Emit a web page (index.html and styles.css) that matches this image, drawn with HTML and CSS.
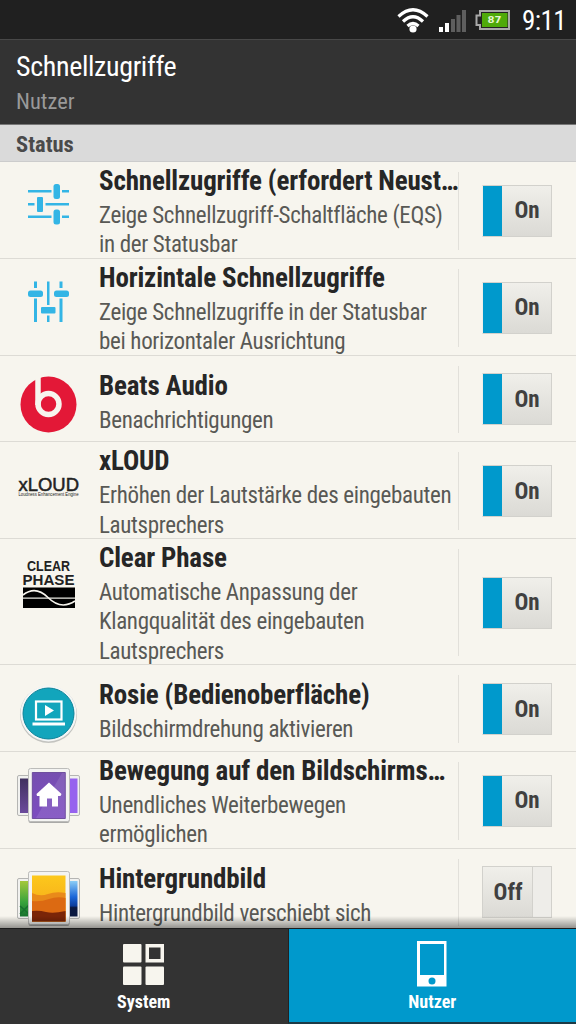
FILE: index.html
```html
<!DOCTYPE html>
<html lang="de">

<head>
  <meta charset="UTF-8">
  <meta name="viewport" content="width=device-width, initial-scale=1.0">
  <title>Schnellzugriffe</title>
  <link rel="stylesheet" href="styles.css">
</head>

<body>
  <div class="statusbar">
    <svg class="wifi" width="32" height="26" viewBox="0 0 32 26">
      <g fill="none" stroke="#fff" stroke-width="3.2">
        <path d="M1.500 9.500Q16 -4 30.500 9.500"/>
        <path d="M6 14.500Q16 5 26 14.500"/>
        <path d="M10.500 19Q16 14 21.500 19"/>
      </g>
      <circle cx="16" cy="22" r="3.600" fill="#fff"/>
    </svg>
    <svg class="signal" width="28" height="22" viewBox="0 0 28 22">
      <g fill="#fff">
        <rect x="0" y="17" width="4" height="5"/>
        <rect x="6" y="13" width="4" height="9"/>
      </g>
      <g fill="#5e5e5e">
        <rect x="12" y="9" width="4" height="13"/>
        <rect x="17.500" y="5" width="4" height="17"/>
        <rect x="23" y="0" width="4" height="22"/>
      </g>
    </svg>
    <svg class="battery" width="36" height="20" viewBox="0 0 36 20">
      <path d="M5 1h29v18H5v-4H1.500V5.500H5z" fill="#222" stroke="#a8a8a8" stroke-width="2"/>
      <rect x="7" y="3" width="25.500" height="14" fill="#4faa0a"/>
      <text x="12.500" y="13.200" textLength="14" lengthAdjust="spacingAndGlyphs">87</text>
    </svg>
    <div class="clock">9:11</div>
  </div>

  <div class="header">
    <h1>Schnellzugriffe</h1>
    <p>Nutzer</p>
  </div>

  <h2 class="section">Status</h2>

  <ul class="list">
    <li class="item">
      <svg class="icon" width="64" height="64" viewBox="0 0 64 64">
        <g fill="#33b5e5">
          <path d="M12 18h23.500v2.500H12zM46 18h7v2.500h-7zM12 31h6.500v2.500H12zM29.500 31H53v2.500H29.500zM12 43.500h23.500V46H12zM46 43.500h7V46h-7z"/>
          <rect x="37.500" y="12" width="6.500" height="15" rx="2.500"/>
          <rect x="21" y="25" width="6" height="15" rx="1"/>
          <rect x="37.500" y="37.500" width="6.500" height="15" rx="2.500"/>
        </g>
      </svg>
      <div class="text">
        <h3>Schnellzugriffe (erfordert Neust…</h3>
        <p>Zeige Schnellzugriff-Schaltfläche (EQS)<br>in der Statusbar</p>
      </div>
      <div class="switch"><button class="toggle on">On</button></div>
    </li>

    <li class="item">
      <svg class="icon" width="64" height="64" viewBox="0 0 64 64">
        <g fill="#33b5e5">
          <path d="M18 12.500h3V19h-3zM18 29.500h3V53h-3zM31 12.500h2.500v23.500H31zM31 46.500h2.500V53H31zM43.500 12.500h3V19h-3zM43.500 29.500h3V53h-3z"/>
          <rect x="12" y="21.500" width="15" height="6.500" rx="2.500"/>
          <rect x="25" y="38" width="14.500" height="6.500" rx="1"/>
          <rect x="38" y="21.500" width="15" height="6.500" rx="2.500"/>
        </g>
      </svg>
      <div class="text">
        <h3>Horizintale Schnellzugriffe</h3>
        <p>Zeige Schnellzugriffe in der Statusbar<br>bei horizontaler Ausrichtung</p>
      </div>
      <div class="switch"><button class="toggle on">On</button></div>
    </li>

    <li class="item single">
      <svg class="icon" width="64" height="64" viewBox="0 0 64 64">
        <circle cx="32.500" cy="32.500" r="28" fill="#e31837"/>
        <path d="M22 3v30" stroke="#f7f5ee" stroke-width="5.500" fill="none"/>
        <circle cx="32.500" cy="32" r="10.500" fill="none" stroke="#f7f5ee" stroke-width="5.500"/>
      </svg>
      <div class="text">
        <h3>Beats Audio</h3>
        <p>Benachrichtigungen</p>
      </div>
      <div class="switch"><button class="toggle on">On</button></div>
    </li>

    <li class="item">
      <svg class="icon" width="64" height="64" viewBox="0 0 64 64">
        <text class="logo xloud" x="2.500" y="38.500" textLength="60.500" lengthAdjust="spacingAndGlyphs">xLOUD</text>
        <text class="logo tiny" x="2.500" y="44" textLength="60" lengthAdjust="spacingAndGlyphs">Loudness Enhancement Engine</text>
      </svg>
      <div class="text">
        <h3>xLOUD</h3>
        <p>Erhöhen der Lautstärke des eingebauten<br>Lautsprechers</p>
      </div>
      <div class="switch"><button class="toggle on">On</button></div>
    </li>

    <li class="item">
      <svg class="icon" width="64" height="64" viewBox="0 0 64 64">
        <text class="logo bold" x="11" y="22" font-size="15.500" textLength="43" lengthAdjust="spacingAndGlyphs">CLEAR</text>
        <text class="logo bold" x="6.500" y="35.500" font-size="14.500" textLength="52" lengthAdjust="spacingAndGlyphs">PHASE</text>
        <path fill="#000" d="M7 38.500h52v20.500H7z"/>
        <path d="M7 49.200h52" stroke="#e8e8e2" stroke-width="1.200"/>
        <path d="M7 46C14 40.500 23 39.500 32 48.500S50 58 59 52" fill="none" stroke="#f7f5ee" stroke-width="1.600"/>
      </svg>
      <div class="text">
        <h3>Clear Phase</h3>
        <p>Automatische Anpassung der<br>Klangqualität des eingebauten<br>Lautsprechers</p>
      </div>
      <div class="switch"><button class="toggle on">On</button></div>
    </li>

    <li class="item single">
      <svg class="icon" width="64" height="64" viewBox="0 0 64 64">
        <circle cx="32.500" cy="33.500" r="28.500" fill="#c4c4c0"/>
        <circle cx="32.500" cy="32.500" r="28" fill="#f4f6f6"/>
        <circle cx="32.500" cy="32.500" r="25.500" fill="#12a5bc" stroke="#0c8399"/>
        <rect x="20" y="20.500" width="25.500" height="18" fill="none" stroke="#fff" stroke-width="2.200"/>
        <path fill="#fff" d="M29 24l9 5.500L29 35zM16.500 41.500H49V44.500H16.500z"/>
      </svg>
      <div class="text">
        <h3>Rosie (Bedienoberfläche)</h3>
        <p>Bildschirmdrehung aktivieren</p>
      </div>
      <div class="switch"><button class="toggle on">On</button></div>
    </li>

    <li class="item">
      <svg class="icon" width="64" height="64" viewBox="0 2 64 64">
        <defs>
          <linearGradient id="dark" x2="0" y2="1"><stop stop-color="#40305f"/><stop offset="1" stop-color="#6b4b9c"/></linearGradient>
          <linearGradient id="violet" x2="0" y2="1"><stop stop-color="#764fb0"/><stop offset="1" stop-color="#7c4cc0"/></linearGradient>
        </defs>
        <g fill="#f1f1ef" stroke="#b5b5b3">
          <rect x="1.500" y="15.500" width="20" height="40" rx="1.500"/>
          <rect x="43.500" y="15.500" width="20" height="40" rx="1.500"/>
        </g>
        <path fill="url(#dark)" d="M4 18.500h9V53H4z"/>
        <path fill="#9662ee" d="M50 18.500h11.500V53H50z"/>
        <rect x="12.500" y="9" width="41" height="54" rx="2" fill="#a9a9a7"/>
        <rect x="12.500" y="8.500" width="41" height="53" rx="2" fill="#f4f4f2" stroke="#bcbcba"/>
        <path fill="url(#violet)" stroke="#5d3b90" stroke-width=".8" d="M16.300 12.500h33v46h-33z"/>
        <path fill="#fff" fill-opacity=".1" d="M46 13L20 58h29V13z"/>
        <path fill="#fff" d="M33 22.500L45.500 34l-1 2h-2.500v10.500h-6v-8h-5v8H23.500V36H21l-.5-2z"/>
      </svg>
      <div class="text">
        <h3>Bewegung auf den Bildschirms…</h3>
        <p>Unendliches Weiterbewegen<br>ermöglichen</p>
      </div>
      <div class="switch"><button class="toggle on">On</button></div>
    </li>

    <li class="item single">
      <svg class="icon" width="64" height="64" viewBox="0 2 64 64">
        <defs>
          <linearGradient id="green" x2="0" y2="1"><stop stop-color="#a4c83a"/><stop offset=".6" stop-color="#38a33c"/><stop offset="1" stop-color="#17722f"/></linearGradient>
          <linearGradient id="blue" x2="0" y2="1"><stop stop-color="#8ccdf6"/><stop offset=".45" stop-color="#1b66d8"/><stop offset=".7" stop-color="#0b3c9c"/><stop offset=".75" stop-color="#0a1840"/></linearGradient>
          <linearGradient id="sun" x2="0" y2="1"><stop stop-color="#fcc81c"/><stop offset="1" stop-color="#f5a21a"/></linearGradient>
        </defs>
        <g fill="#f1f1ef" stroke="#b5b5b3">
          <rect x="1.500" y="15.500" width="20" height="40" rx="1.500"/>
          <rect x="43.500" y="15.500" width="20" height="40" rx="1.500"/>
        </g>
        <path fill="url(#green)" d="M4 18h9v35.500H4z"/>
        <path d="M4 43l9 8M13 42l-9 9" stroke="#17722f" stroke-width="1.500"/>
        <path fill="url(#blue)" d="M50 18h11.500v35.500H50z"/>
        <rect x="12.500" y="9" width="41" height="54" rx="2" fill="#a9a9a7"/>
        <rect x="12.500" y="8.500" width="41" height="53" rx="2" fill="#f4f4f2" stroke="#bcbcba"/>
        <path fill="url(#sun)" d="M16 12.500h33.500v46H16z"/>
        <path fill="#e98a1a" d="M16 30q8 4 16 1t17.500-1v28.500H16z"/>
        <path fill="#dc6a12" d="M16 38q9 1 17-2t16.500-1v23.500H16z"/>
        <path fill="#7a2508" d="M16 48q7-1 14 1t19.500-1v10.500H16z"/>
      </svg>
      <div class="text">
        <h3>Hintergrundbild</h3>
        <p>Hintergrundbild verschiebt sich</p>
      </div>
      <div class="switch"><button class="toggle off">Off</button></div>
    </li>
  </ul>

  <div class="tabs">
    <div class="tab">
      <svg width="41" height="41" viewBox="0 0 41 41" fill="#f7f5ee">
        <rect x="0" y="0" width="18.500" height="18.500" rx="1"/>
        <rect x="0" y="22.500" width="18.500" height="18.500" rx="1"/>
        <rect x="22.500" y="22.500" width="18.500" height="18.500" rx="1"/>
        <rect x="24.250" y="1.750" width="15" height="15" fill="none" stroke="#f7f5ee" stroke-width="3.500"/>
      </svg>
      <span>System</span>
    </div>
    <div class="tab active">
      <svg width="30" height="46" viewBox="0 0 30 46">
        <path fill="#fff" fill-rule="evenodd" d="M0 0h29.500v45.500H0zM3 3v31h24V3z"/>
        <circle cx="15" cy="40" r="3.500" fill="#0099cc"/>
      </svg>
      <span>Nutzer</span>
    </div>
  </div>
</body>

</html>
```
FILE: styles.css
```css
* {
  box-sizing: border-box;
  margin: 0;
  padding: 0;
}

body {
  display: flex;
  flex-direction: column;
  width: 576px;
  height: 1024px;
  overflow: hidden;
  background-color: #f7f5ee;
  font-family: "Roboto Condensed", Roboto, sans-serif;
  font-stretch: 75%;
  font-variant-ligatures: none;
}

.statusbar {
  display: flex;
  flex: none;
  justify-content: flex-end;
  height: 39px;
  padding-right: 10px;
  background-color: #202020;
}

.wifi {
  margin: 7px 10px 0 0;
}

.signal {
  margin: 10px 8px 0 0;
}

.battery {
  margin: 10px 11px 0 0;
}

.battery text {
  fill: #e6f5d0;
  font: bold 9px "DejaVu Sans", sans-serif;
}

.clock {
  color: #fff;
  font-size: 27px;
  letter-spacing: -0.6px;
  line-height: 43px;
}

.header {
  flex: none;
  height: 86px;
  padding: 10px 16px 0;
  border-top: 1px solid #484848;
  border-bottom: 1px solid #777;
  background-color: #333;
}

.header h1 {
  color: #fff;
  font-size: 28px;
  font-weight: normal;
  letter-spacing: -0.35px;
  line-height: 34px;
}

.header p {
  color: #999;
  font-size: 22.5px;
  line-height: 34px;
}

.section {
  flex: none;
  height: 37px;
  padding-left: 16px;
  border-bottom: 1px solid #ccc;
  background-color: #dadada;
  color: #4a4a4a;
  font-size: 22.5px;
  line-height: 38px;
}

.list {
  flex: 1;
  overflow: hidden;
  position: relative;
  list-style: none;
}

/* shadow above the tab bar */
.list::after {
  content: "";
  position: absolute;
  left: 0;
  right: 0;
  bottom: 0;
  height: 12px;
  background: linear-gradient(transparent, rgba(0, 0, 0, 0.4));
}

.item {
  display: flex;
  padding-left: 16px;
  border-bottom: 1px solid #dddbd5;
}

.icon {
  flex: none;
  margin-top: 10px;
}

.text {
  width: 359px;
  margin: 0 0 -2px 19px;
  padding-top: 2px;
  white-space: nowrap;
}

.text h3 {
  margin-bottom: 3px;
  color: #262626;
  font-size: 27px;
  letter-spacing: -0.16px;
  line-height: 34px;
}

.text p {
  color: #595955;
  font-size: 23px;
  letter-spacing: -0.33px;
  line-height: 29.4px;
}

.single .icon {
  margin-top: 16px;
}

.single .text {
  margin-bottom: 0;
  padding: 13px 0 6.2px;
}

.switch {
  display: flex;
  align-items: center;
  margin: 10px 0 8px;
  padding-left: 23px;
  border-left: 1px solid #e2e0da;
}

.toggle {
  width: 70px;
  height: 52px;
  border: 1px solid #d2d1cc;
  background: linear-gradient(#f0efea, #dbdad5);
  color: #404040;
  font: inherit;
  font-size: 23px;
  font-weight: bold;
}

.on {
  padding-left: 20px;
  border-left-color: #f0efea;
  background: linear-gradient(#0099cc, #0099cc) 0 0 / 19px 100% no-repeat, linear-gradient(#f0efea, #dbdad5);
}

.off {
  padding-right: 18px;
  background: linear-gradient(#eeede9, #eeede9) 100% 0 / 18px 100% no-repeat, linear-gradient(#d2d1cc, #d2d1cc) 49px 0 / 1px 100% no-repeat, linear-gradient(#f0efea, #dbdad5);
}

.logo {
  fill: #222;
  font-family: "Liberation Sans", sans-serif;
}

.xloud {
  stroke: #222;
  stroke-width: 0.5px;
  font-size: 18px;
}

.tiny {
  font-size: 5px;
}

.bold {
  font-weight: bold;
}

.tabs {
  display: flex;
  flex: none;
  height: 96px;
  border-top: 1px solid #1c1c1c;
  background-color: #333;
}

.tab {
  display: flex;
  flex: 1;
  flex-direction: column;
  gap: 5px;
  align-items: center;
  justify-content: flex-end;
  padding-bottom: 10px;
  color: #fff;
  font-size: 18px;
  font-weight: bold;
  line-height: 24px;
}

.active {
  gap: 3px;
  padding-bottom: 8px;
  border-left: 1px solid #222;
  border-bottom: 2px solid #1d3a45;
  background-color: #0099cc;
}
```
